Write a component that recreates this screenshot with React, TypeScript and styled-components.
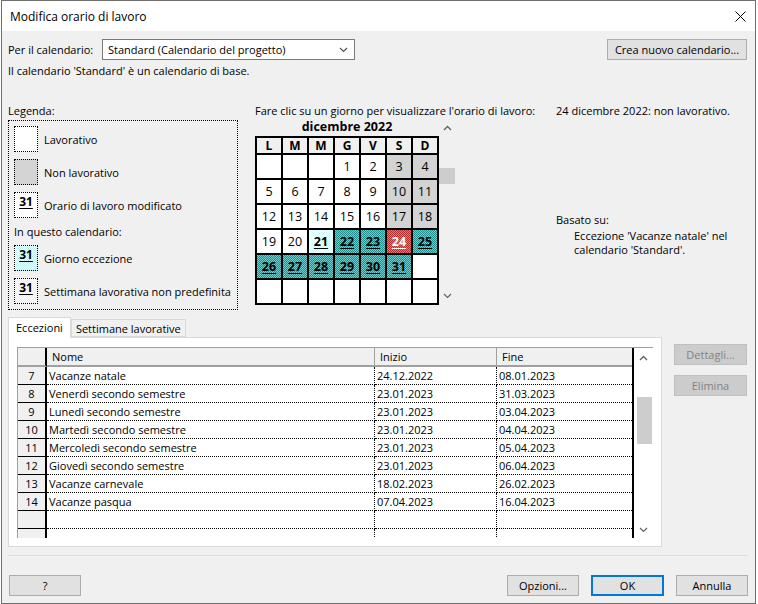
import React from 'react';
import styled, { createGlobalStyle, css } from 'styled-components';

const GlobalStyle = createGlobalStyle`
  html, body { margin: 0; padding: 0; background: #ffffff; }
  body { font-family: "Open Sans", "Noto Sans", sans-serif; font-size: 11px; color: #000; }
  * { box-sizing: border-box; }
`;

const checker = (a: string, b: string) => css`
  background-color: ${a};
  background-image: repeating-conic-gradient(${a} 0 25%, ${b} 0 50%);
  background-size: 2px 2px;
`;

const Dialog = styled.div`
  width: 755px;
  height: 604px;
  margin-left: 1px;
  border: 1px solid #6f6f6f;
  display: flex;
  flex-direction: column;
  background: #f0f0f0;
`;

const TitleBar = styled.div`
  height: 30px;
  background: #ffffff;
  display: flex;
  align-items: center;
  justify-content: space-between;
  padding: 0 9px 0 8px;
  font-size: 12px;
`;

const Body = styled.div`
  flex: 1;
  padding: 8px 7px 7px 6px;
  display: flex;
  flex-direction: column;
`;

const TopRow = styled.div`
  display: flex;
  align-items: center;
  height: 21px;
`;

const FieldLabel = styled.div`
  width: 94px;
  white-space: nowrap;
`;

const Select = styled.div`
  width: 253px;
  height: 21px;
  border: 1px solid #7a7a7a;
  background: #ffffff;
  display: flex;
  align-items: center;
  justify-content: space-between;
  padding: 0 6px 0 5px;
`;

const Button = styled.div<{ $w: number; $primary?: boolean; $disabled?: boolean; $mr?: number }>`
  width: ${p => p.$w}px;
  height: 21px;
  margin-right: ${p => p.$mr ?? 0}px;
  display: flex;
  align-items: center;
  justify-content: center;
  background: ${p => (p.$disabled ? '#cccccc' : '#e1e1e1')};
  border: ${p => (p.$primary ? '2px solid #0078d7' : `1px solid ${p.$disabled ? '#bfbfbf' : '#adadad'}`)};
  color: ${p => (p.$disabled ? '#838383' : '#000')};
  white-space: nowrap;
`;

const Spacer = styled.div`
  flex: 1;
`;

const InfoLine = styled.div`
  margin-top: 3px;
  line-height: 16px;
`;

const Middle = styled.div`
  margin-top: 24px;
  height: 207px;
  display: flex;
`;

const LegendCol = styled.div`
  width: 230px;
  display: flex;
  flex-direction: column;
`;

const Caption = styled.div`
  line-height: 16px;
  height: 16px;
  white-space: nowrap;
`;

const LegendBox = styled.div`
  margin-top: 1px;
  height: 190px;
  border: 1px dotted #000;
  padding: 5px 0 0 5px;
  display: flex;
  flex-direction: column;
`;

const LegendItem = styled.div`
  display: flex;
  align-items: center;
  height: 26px;
  margin-bottom: 7px;
  gap: 6px;
`;

const LegendSub = styled.div`
  line-height: 16px;
  margin: -1px 0 5px 0;
`;

type SwatchKind = 'work' | 'off' | 'mod' | 'exc' | 'week';

const Swatch = styled.div<{ $kind: SwatchKind }>`
  width: 24px;
  height: 26px;
  border: 1px dotted #000;
  display: flex;
  justify-content: center;
  padding-top: 1px;
  font-weight: 700;
  font-size: 12px;
  text-decoration: underline;
  text-underline-offset: 2px;
  line-height: 16px;
  ${p =>
    p.$kind === 'off'
      ? css`background: #d4d4d4;`
      : p.$kind === 'exc'
      ? checker('#c4eeee', '#ffffff')
      : p.$kind === 'week'
      ? checker('#fff49a', '#ffffff')
      : css`background: #ffffff;`}
`;

const CalCol = styled.div`
  margin-left: 17px;
  width: 301px;
  display: flex;
  flex-direction: column;
`;

const CalWidget = styled.div`
  display: flex;
`;

const CalMain = styled.div`
  display: flex;
  flex-direction: column;
`;

const MonthTitle = styled.div`
  height: 16px;
  line-height: 16px;
  text-align: center;
  font-weight: 700;
  font-size: 12.5px;
`;

const CalGrid = styled.div`
  margin-top: 1px;
  display: grid;
  grid-template-columns: repeat(7, 24px);
  grid-template-rows: 15px repeat(6, 23px);
  gap: 2px;
  padding: 2px;
  background: #000;
  width: 184px;
`;

const DayHead = styled.div`
  background: #f0f0f0;
  font-weight: 700;
  font-size: 12px;
  display: flex;
  align-items: center;
  justify-content: center;
`;

type DayKind = 'work' | 'off' | 'exc' | 'excLight' | 'sel' | 'empty';

const Day = styled.div<{ $kind: DayKind }>`
  display: flex;
  align-items: center;
  justify-content: center;
  font-size: 12.5px;
  ${p =>
    p.$kind === 'off'
      ? css`background: #d3d3d3;`
      : p.$kind === 'exc'
      ? checker('#1f8f8f', '#70cccc')
      : p.$kind === 'excLight'
      ? checker('#d8fafa', '#ffffff')
      : p.$kind === 'sel'
      ? checker('#b03030', '#e07a7a')
      : css`background: #ffffff;`}
  ${p =>
    (p.$kind === 'exc' || p.$kind === 'excLight' || p.$kind === 'sel') &&
    css`
      font-weight: 700;
      text-decoration: underline;
      text-underline-offset: 2px;
    `}
  color: ${p => (p.$kind === 'sel' ? '#ffffff' : '#000')};
`;

const VScroll = styled.div<{ $bg: string; $w: number }>`
  width: ${p => p.$w}px;
  background: ${p => p.$bg};
  display: flex;
  flex-direction: column;
`;

const ScrollArrow = styled.div<{ $h: number }>`
  height: ${p => p.$h}px;
  display: flex;
  align-items: center;
  justify-content: center;
`;

const ScrollTrack = styled.div<{ $top: number }>`
  flex: 1;
  padding-top: ${p => p.$top}px;
  display: flex;
  flex-direction: column;
  align-items: flex-end;
`;

const Thumb = styled.div<{ $w: number; $h: number }>`
  width: ${p => p.$w}px;
  height: ${p => p.$h}px;
  background: #cdcdcd;
`;

const InfoCol = styled.div`
  flex: 1;
  display: flex;
  flex-direction: column;
`;

const BasedOn = styled.div`
  margin-top: 93px;
  line-height: 16px;
`;

const BasedText = styled.div`
  padding-left: 18px;
  line-height: 14px;
  margin-top: 1px;
`;

const TabsArea = styled.div`
  margin-top: 7px;
  display: flex;
`;

const TabsCol = styled.div`
  width: 654px;
  display: flex;
  flex-direction: column;
`;

const TabStrip = styled.div`
  height: 20px;
  display: flex;
  align-items: flex-end;
`;

const Tab = styled.div<{ $active?: boolean }>`
  height: ${p => (p.$active ? 21 : 18)}px;
  border: 1px solid #d9d9d9;
  border-bottom: ${p => (p.$active ? 'none' : '1px solid #d9d9d9')};
  background: ${p => (p.$active ? '#ffffff' : '#f0f0f0')};
  padding: ${p => (p.$active ? '1px 7px 0 7px' : '0 4px')};
  margin-bottom: ${p => (p.$active ? -1 : 0)}px;
  position: relative;
  z-index: ${p => (p.$active ? 1 : 0)};
  line-height: 17px;
  white-space: nowrap;
`;

const TabPanel = styled.div`
  height: 210px;
  border: 1px solid #d9d9d9;
  background: #ffffff;
  padding: 9px 7px 8px 8px;
`;

const TableBox = styled.div`
  display: flex;
  width: 636px;
  height: 191px;
  border-left: 1px solid #a0a0a0;
  border-top: 1px solid #a0a0a0;
  overflow: hidden;
`;

const GridArea = styled.div`
  width: 616px;
  border-right: 2px solid #000;
  display: flex;
  flex-direction: column;
`;

const Row = styled.div<{ $head?: boolean }>`
  display: grid;
  grid-template-columns: 29px 328px 122px 135px;
  height: ${p => (p.$head ? 19 : 18)}px;
  flex-shrink: 0;
`;

const Corner = styled.div`
  background: #f0f0f0;
  border-right: 2px solid #000;
  border-bottom: 2px solid #a0a0a0;
`;

const HeaderCell = styled.div<{ $last?: boolean }>`
  background: #f0f0f0;
  border-bottom: 2px solid #a0a0a0;
  border-right: ${p => (p.$last ? 'none' : '1px solid #a0a0a0')};
  padding-left: 5px;
  line-height: 17px;
`;

const RowHead = styled.div`
  background: #f0f0f0;
  border-right: 2px solid #000;
  border-bottom: 1px solid #000;
  text-align: center;
  line-height: 17px;
`;

const Cell = styled.div<{ $last?: boolean }>`
  border-bottom: 1px dotted #000;
  border-right: ${p => (p.$last ? 'none' : '1px dotted #000')};
  padding-left: 2px;
  line-height: 17px;
  white-space: nowrap;
  overflow: hidden;
`;

const SideButtons = styled.div`
  margin-left: 12px;
  padding-top: 27px;
  display: flex;
  flex-direction: column;
  gap: 10px;
`;

const Separator = styled.div`
  margin-top: 8px;
  height: 1px;
  background: #dfdfdf;
`;

const Footer = styled.div`
  margin-top: 19px;
  display: flex;
  align-items: center;
  padding-left: 1px;
`;

const FooterGroup = styled.div`
  display: flex;
  gap: 12px;
`;

const ChevronUp = () => (
  <svg width="9" height="6" viewBox="0 0 9 6">
    <polyline points="1,5 4.5,1.5 8,5" fill="none" stroke="#606060" strokeWidth="1.3" />
  </svg>
);

const ChevronDown = ({ color = '#606060' }: { color?: string }) => (
  <svg width="9" height="6" viewBox="0 0 9 6">
    <polyline points="1,1 4.5,4.5 8,1" fill="none" stroke={color} strokeWidth="1.1" />
  </svg>
);

const CloseIcon = () => (
  <svg width="11" height="11" viewBox="0 0 11 11">
    <path d="M0.5 0.5 L10.5 10.5 M10.5 0.5 L0.5 10.5" stroke="#000" strokeWidth="1" />
  </svg>
);

type DayData = { n?: number; k: DayKind };
const w = (n: number): DayData => ({ n, k: 'work' });
const o = (n: number): DayData => ({ n, k: 'off' });
const x = (n: number): DayData => ({ n, k: 'exc' });
const E: DayData = { k: 'empty' };

const weeks: DayData[][] = [
  [E, E, E, w(1), w(2), o(3), o(4)],
  [w(5), w(6), w(7), w(8), w(9), o(10), o(11)],
  [w(12), w(13), w(14), w(15), w(16), o(17), o(18)],
  [w(19), w(20), { n: 21, k: 'excLight' }, x(22), x(23), { n: 24, k: 'sel' }, x(25)],
  [x(26), x(27), x(28), x(29), x(30), x(31), E],
  [E, E, E, E, E, E, E],
];

const dayHeads = ['L', 'M', 'M', 'G', 'V', 'S', 'D'];

const exceptions: [string, string, string, string][] = [
  ['7', 'Vacanze natale', '24.12.2022', '08.01.2023'],
  ['8', 'Venerdì secondo semestre', '23.01.2023', '31.03.2023'],
  ['9', 'Lunedì secondo semestre', '23.01.2023', '03.04.2023'],
  ['10', 'Martedì secondo semestre', '23.01.2023', '04.04.2023'],
  ['11', 'Mercoledì secondo semestre', '23.01.2023', '05.04.2023'],
  ['12', 'Giovedì secondo semestre', '23.01.2023', '06.04.2023'],
  ['13', 'Vacanze carnevale', '18.02.2023', '26.02.2023'],
  ['14', 'Vacanze pasqua', '07.04.2023', '16.04.2023'],
  ['', '', '', ''],
  ['', '', '', ''],
];

export default function App() {
  return (
    <>
      <GlobalStyle />
      <Dialog>
        <TitleBar>
          <span>Modifica orario di lavoro</span>
          <CloseIcon />
        </TitleBar>
        <Body>
          <TopRow>
            <FieldLabel>Per il calendario:</FieldLabel>
            <Select>
              <span>Standard (Calendario del progetto)</span>
              <ChevronDown color="#505050" />
            </Select>
            <Spacer />
            <Button $w={140} $mr={1}>Crea nuovo calendario...</Button>
          </TopRow>
          <InfoLine>Il calendario 'Standard' è un calendario di base.</InfoLine>

          <Middle>
            <LegendCol>
              <Caption>Legenda:</Caption>
              <LegendBox>
                <LegendItem>
                  <Swatch $kind="work" />
                  <span>Lavorativo</span>
                </LegendItem>
                <LegendItem>
                  <Swatch $kind="off" />
                  <span>Non lavorativo</span>
                </LegendItem>
                <LegendItem>
                  <Swatch $kind="mod">31</Swatch>
                  <span>Orario di lavoro modificato</span>
                </LegendItem>
                <LegendSub>In questo calendario:</LegendSub>
                <LegendItem>
                  <Swatch $kind="exc">31</Swatch>
                  <span>Giorno eccezione</span>
                </LegendItem>
                <LegendItem>
                  <Swatch $kind="week">31</Swatch>
                  <span>Settimana lavorativa non predefinita</span>
                </LegendItem>
              </LegendBox>
            </LegendCol>

            <CalCol>
              <Caption>Fare clic su un giorno per visualizzare l'orario di lavoro:</Caption>
              <CalWidget>
                <CalMain>
                  <MonthTitle>dicembre 2022</MonthTitle>
                  <CalGrid>
                    {dayHeads.map((d, i) => (
                      <DayHead key={'h' + i}>{d}</DayHead>
                    ))}
                    {weeks.flat().map((d, i) => (
                      <Day key={i} $kind={d.k}>
                        {d.n ?? ''}
                      </Day>
                    ))}
                  </CalGrid>
                </CalMain>
                <VScroll $bg="#f0f0f0" $w={16}>
                  <ScrollArrow $h={18}>
                    <ChevronUp />
                  </ScrollArrow>
                  <ScrollTrack $top={31}>
                    <Thumb $w={16} $h={16} />
                  </ScrollTrack>
                  <ScrollArrow $h={18}>
                    <ChevronDown />
                  </ScrollArrow>
                </VScroll>
              </CalWidget>
            </CalCol>

            <InfoCol>
              <Caption>24 dicembre 2022: non lavorativo.</Caption>
              <BasedOn>Basato su:</BasedOn>
              <BasedText>
                Eccezione 'Vacanze natale' nel
                <br />
                calendario 'Standard'.
              </BasedText>
            </InfoCol>
          </Middle>

          <TabsArea>
            <TabsCol>
              <TabStrip>
                <Tab $active>Eccezioni</Tab>
                <Tab>Settimane lavorative</Tab>
              </TabStrip>
              <TabPanel>
                <TableBox>
                  <GridArea>
                    <Row $head>
                      <Corner />
                      <HeaderCell>Nome</HeaderCell>
                      <HeaderCell>Inizio</HeaderCell>
                      <HeaderCell $last>Fine</HeaderCell>
                    </Row>
                    {exceptions.map((r, i) => (
                      <Row key={i}>
                        <RowHead>{r[0]}</RowHead>
                        <Cell>{r[1]}</Cell>
                        <Cell>{r[2]}</Cell>
                        <Cell $last>{r[3]}</Cell>
                      </Row>
                    ))}
                  </GridArea>
                  <VScroll $bg="#ffffff" $w={18}>
                    <ScrollArrow $h={19}>
                      <ChevronUp />
                    </ScrollArrow>
                    <ScrollTrack $top={30}>
                      <Thumb $w={15} $h={47} />
                    </ScrollTrack>
                    <ScrollArrow $h={17}>
                      <ChevronDown />
                    </ScrollArrow>
                  </VScroll>
                </TableBox>
              </TabPanel>
            </TabsCol>
            <SideButtons>
              <Button $w={73} $disabled>Dettagli...</Button>
              <Button $w={73} $disabled>Elimina</Button>
            </SideButtons>
          </TabsArea>

          <Separator />
          <Footer>
            <Button $w={72}>?</Button>
            <Spacer />
            <FooterGroup>
              <Button $w={72}>Opzioni...</Button>
              <Button $w={73} $primary>OK</Button>
              <Button $w={72}>Annulla</Button>
            </FooterGroup>
          </Footer>
        </Body>
      </Dialog>
    </>
  );
}
